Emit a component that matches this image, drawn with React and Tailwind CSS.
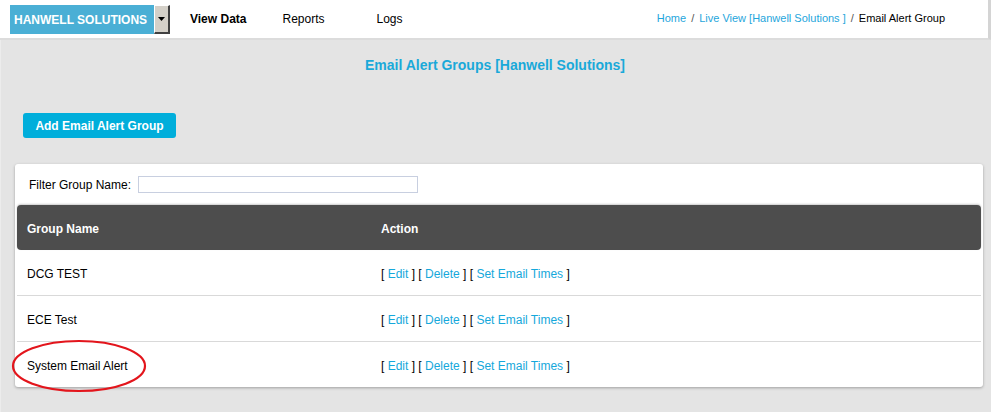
export default function App() {
  const rows = ["DCG TEST", "ECE Test", "System Email Alert"];
  return (
    <div className="w-[991px] h-[412px] overflow-hidden bg-[#e4e4e4] text-[12px] text-black" style={{ fontFamily: '"Liberation Sans", Arial, sans-serif' }}>
      <div className="h-[40px] bg-white border-b-2 border-[#dcdcdc] border-r-[3px] border-r-[#d4d4d4] flex items-start">
        <div className="ml-[10px] mt-[5px] flex">
          <div className="w-[144px] h-[29px] bg-[#4aafd5] text-white font-bold text-[12px] flex items-center pl-[4px] pt-[1px]">HANWELL SOLUTIONS</div>
          <div className="w-[16px] h-[29px] bg-[#d4d0c8] border-l border-t border-l-white border-t-white border-r-2 border-b-2 border-r-[#404040] border-b-[#404040] flex items-center justify-center">
            <svg width="7" height="4" viewBox="0 0 7 4"><path d="M0 0h7L3.5 4z" fill="#000" /></svg>
          </div>
        </div>
        <div className="ml-[20px] h-[37px] flex items-center font-bold">View Data</div>
        <div className="ml-[36px] h-[37px] flex items-center">Reports</div>
        <div className="ml-[52px] h-[37px] flex items-center">Logs</div>
        <div className="ml-auto mr-[43px] h-[37px] flex items-center text-[11px]">
          <span className="text-[#1fa6dc]">Home</span>
          <span className="mx-[5px] text-[#555]">/</span>
          <span className="text-[#1fa6dc]">Live View [Hanwell Solutions ]</span>
          <span className="mx-[5px] text-[#555]">/</span>
          <span>Email Alert Group</span>
        </div>
      </div>
      <div className="border-l border-[#ececec] h-[372px]">
        <div className="pt-[15px] text-center font-bold text-[14px] text-[#1aa9d9] pr-[2px]">Email Alert Groups [Hanwell Solutions]</div>
        <div className="mt-[37px] ml-[22px]">
          <button className="h-[25px] w-[153px] rounded-[3px] bg-[#00aedb] text-white font-bold text-[12px] flex items-center justify-center">Add Email Alert Group</button>
        </div>
        <div className="mt-[26px] ml-[14px] w-[968px] bg-white rounded-[3px] shadow-[0_1px_3px_rgba(0,0,0,0.3)] px-[2px]">
          <div className="h-[41px] flex items-center pl-[12px]">
            <span>Filter Group Name:</span>
            <div className="ml-[7px] w-[280px] h-[17px] border border-[#c8cfe0]"></div>
          </div>
          <div className="h-[45px] pt-[3px] bg-[#4d4d4d] rounded-[4px] shadow-[0_-1px_2px_rgba(0,0,0,0.2)] flex items-center text-white font-bold">
            <div className="w-[364px] pl-[10px]">Group Name</div>
            <div>Action</div>
          </div>
          {rows.map((r, i) => (
            <div key={r} className={"flex items-center pt-[3px] " + (i < 2 ? "h-[46px] border-b border-[#d9d9d9]" : "h-[45px]")}>
              <div className="w-[364px] pl-[10px]">{r}</div>
              <div>
                [ <span className="text-[#15a8db]">Edit</span> ] [ <span className="text-[#15a8db]">Delete</span> ] [ <span className="text-[#15a8db]">Set Email Times</span> ]
              </div>
            </div>
          ))}
        </div>
      </div>
      <svg className="absolute left-[11px] top-[339px]" width="137" height="55" viewBox="0 0 137 55">
        <ellipse cx="68" cy="27" rx="66" ry="25" fill="none" stroke="#e3151c" strokeWidth="2.2" />
      </svg>
    </div>
  );
}
